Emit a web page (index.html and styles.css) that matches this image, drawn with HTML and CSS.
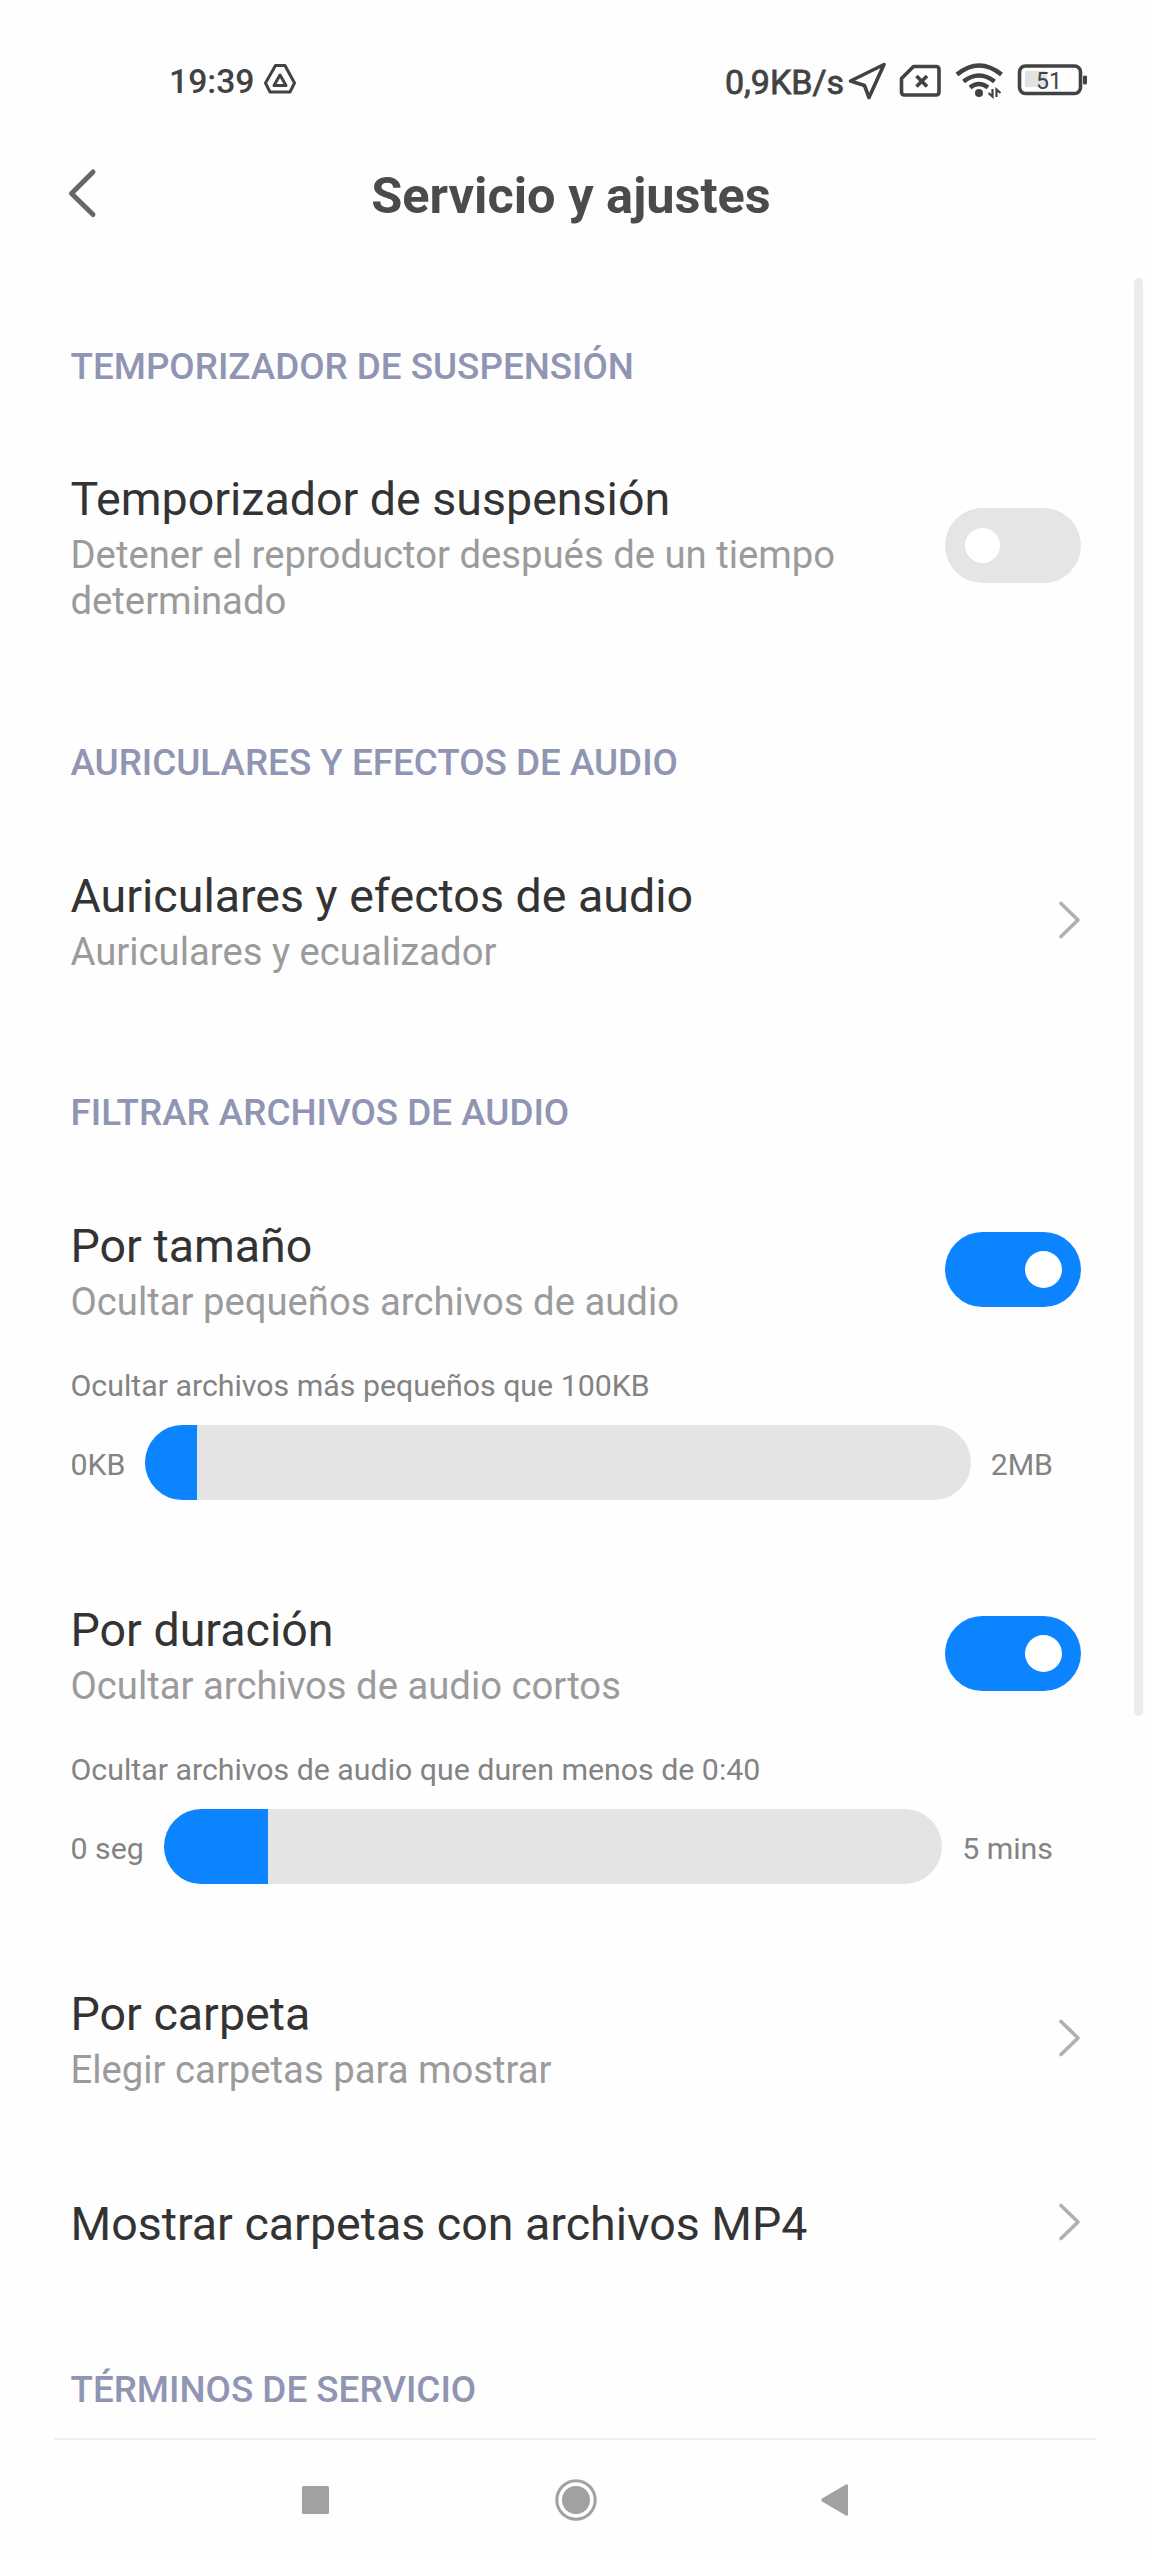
FILE: index.html
```html
<!DOCTYPE html>
<html lang="es">
<head>
<meta charset="utf-8">
<title>Servicio y ajustes</title>
<link rel="stylesheet" href="styles.css">
</head>
<body>
<header class="status">
  <span class="clock">19:39</span>
  <svg class="drive" width="34" height="32" viewBox="263 63 34 32"><path d="M275.500 65.500h9.500l9.500 17.500-4.500 9h-20l-4.500-9z"/><path d="M280 75l-6 10.500h12z"/></svg>
  <span class="speed">0,9KB/s</span>
  <svg class="tray" width="242" height="40" viewBox="848 60 242 40">
    <path d="M884 64.500L850.500 81l14 4.500 4.500 12z"/>
    <path d="M913.500 66.500H936q3 0 3 3V92q0 3-3 3H904.500q-3 0-3-3V78.500zM916.500 76l10.500 10.500M927 76l-10.500 10.500"/>
    <path d="M957 74.500q22-18 44.500 0M963.500 81.500q15.500-12 31 0M970 87.500q9-7 18 0" class="wave"/>
    <circle cx="979" cy="93" r="4" class="solid"/>
    <path d="M992.500 89v7.500l-4-3.500M996.500 97v-7.500l4 3.500" class="thin"/>
    <rect x="1025" y="71" width="22" height="16" rx="2" class="charge"/>
    <rect x="1019.500" y="66" width="61" height="27.500" rx="6"/>
    <rect x="1083" y="75.500" width="4" height="9" rx="1.500" class="solid"/>
    <text x="1036" y="88.500">51</text>
  </svg>
</header>
<div class="titlebar">
  <svg class="back" width="30" height="52" viewBox="67 167 30 52"><path d="M93 172L71.500 193.500 93 214.500"/></svg>
  <h1>Servicio y ajustes</h1>
</div>
<main>
  <h2>TEMPORIZADOR DE SUSPENSIÓN</h2>
  <section class="item tall">
    <div class="copy"><h3>Temporizador de suspensión</h3><p>Detener el reproductor después de un tiempo determinado</p></div>
    <span class="toggle"></span>
  </section>
  <h2>AURICULARES Y EFECTOS DE AUDIO</h2>
  <section class="item">
    <div class="copy"><h3>Auriculares y efectos de audio</h3><p>Auriculares y ecualizador</p></div>
    <svg class="chev" width="24" height="40" viewBox="0 0 24 40"><path d="M4 3.500L21 20 4 36.500"/></svg>
  </section>
  <h2>FILTRAR ARCHIVOS DE AUDIO</h2>
  <section class="item">
    <div class="copy"><h3>Por tamaño</h3><p>Ocultar pequeños archivos de audio</p></div>
    <span class="toggle on"></span>
  </section>
  <section class="range">
    <label>Ocultar archivos más pequeños que 100KB</label>
    <div class="scale"><span>0KB</span><div class="bar"><div class="fill" style="width:52px"></div></div><span>2MB</span></div>
  </section>
  <section class="item">
    <div class="copy"><h3>Por duración</h3><p>Ocultar archivos de audio cortos</p></div>
    <span class="toggle on"></span>
  </section>
  <section class="range">
    <label>Ocultar archivos de audio que duren menos de 0:40</label>
    <div class="scale"><span>0 seg</span><div class="bar"><div class="fill" style="width:104px"></div></div><span>5 mins</span></div>
  </section>
  <section class="item">
    <div class="copy"><h3>Por carpeta</h3><p>Elegir carpetas para mostrar</p></div>
    <svg class="chev" width="24" height="40" viewBox="0 0 24 40"><path d="M4 3.500L21 20 4 36.500"/></svg>
  </section>
  <section class="item single">
    <div class="copy"><h3>Mostrar carpetas con archivos MP4</h3></div>
    <svg class="chev" width="24" height="40" viewBox="0 0 24 40"><path d="M4 3.500L21 20 4 36.500"/></svg>
  </section>
  <h2>TÉRMINOS DE SERVICIO</h2>
</main>
<nav>
  <svg width="44" height="44" viewBox="0 0 44 44"><rect x="8" y="8" width="27" height="28" rx="1.500"/></svg>
  <svg width="44" height="44" viewBox="0 0 44 44"><circle cx="22" cy="22" r="14"/><circle cx="22" cy="22" r="19.200" class="ring"/></svg>
  <svg width="44" height="44" viewBox="0 0 44 44"><path d="M9 20.500L33 6.500Q35 5.500 35 8V36Q35 38.500 33 37.500L9 23.500Q7.500 22 9 20.500z"/></svg>
</nav>
<div class="scrollbar"></div>
</body>
</html>
```
FILE: styles.css
```css
* { box-sizing: border-box; margin: 0; padding: 0; }
body { position: relative; width: 1152px; height: 2560px; overflow: hidden; background: #fefefe; font-family: Roboto, sans-serif; display: flex; flex-direction: column; }
svg { display: block; flex: none; }
.status { height: 140px; padding: 60px 62px 0 169px; display: flex; align-items: flex-start; color: #424242; font-size: 33.700px; line-height: 44px; font-weight: 500; }
.status span { white-space: nowrap; }
.drive { margin: 3px 0 0 9px; fill: none; stroke: #424242; stroke-width: 3; stroke-linejoin: round; }
.speed { margin-left: auto; font-size: 34px; font-weight: 400; -webkit-text-stroke: .8px #424242; }
.tray { margin-left: 4px; fill: none; stroke: #424242; stroke-width: 3.6; stroke-linejoin: round; }
.tray .wave { stroke-width: 4.600; }
.tray .thin { stroke-width: 2.200; stroke-linejoin: miter; }
.tray .solid { fill: #424242; stroke: none; }
.tray .charge { fill: #e2e2e2; stroke: none; }
.tray text { fill: #424242; stroke: none; font-size: 23px; font-weight: 400; }
.titlebar { height: 204px; padding: 27px 67px 0; display: grid; grid-template-columns: 30px 1fr 30px; }
.back { fill: none; stroke: #666; stroke-width: 5; stroke-linecap: round; stroke-linejoin: round; }
h1 { color: #4b4b4b; font-size: 50.500px; line-height: 57px; font-weight: 700; text-align: center; white-space: nowrap; margin-left: -10px; }
main { height: 2094px; padding: 1px 0 0 70.500px; overflow: hidden; flex: none; }
h2 { height: 44px; line-height: 44px; font-size: 36.800px; font-weight: 500; color: #8f95b2; white-space: nowrap; }
.item { height: 107px; margin: 84px 71px 115px 0; display: flex; align-items: center; justify-content: space-between; }
.tall { height: 152px; margin-top: 83px; margin-bottom: 117px; }
.copy { width: 800px; }
h3 { font-size: 46.550px; line-height: 54px; font-weight: 400; color: #333; white-space: nowrap; }
p { margin-top: 7px; font-size: 38.250px; line-height: 45.300px; color: #9b9b9b; }
.toggle { width: 136px; height: 75px; border-radius: 38px; background: #e5e5e5; padding: 20px; margin-top: -7px; }
.tall .toggle { margin-top: -5px; }
.toggle::before { content: ""; display: block; width: 35px; height: 35px; border-radius: 50%; background: #fff; }
.on { background: #0d84ff; padding: 19px; }
.on::before { width: 37px; height: 37px; margin-left: auto; }
.chev { margin-top: -6px; fill: none; stroke: #b0b0b0; stroke-width: 3.600; stroke-linecap: round; stroke-linejoin: round; }
.range { margin: -75px 99px 103px 0; color: #838383; font-size: 30.300px; }
.range label { display: block; line-height: 38px; margin-bottom: 21px; padding-top: 1px; height: 38px; }
.scale { display: flex; align-items: center; gap: 20px; height: 75px; }
.scale span { line-height: 38px; white-space: nowrap; margin-top: 4px; }
.bar { flex: 1; height: 75px; border-radius: 38px; overflow: hidden; background: #e4e4e4; }
.fill { height: 100%; background: #0d84ff; }
.range + .item { margin-top: 0; }
.item.single { height: 54px; margin-top: -12px; margin-bottom: 117px; }
.single .chev { margin-top: -4px; }
nav { height: 122px; margin: 0 55px 0 54px; border-top: 2px solid #f1f1f1; padding: 38px 240px 0 240px; display: flex; justify-content: space-between; }
nav svg { fill: #a1a1a1; }
nav .ring { fill: none; stroke: #a1a1a1; stroke-width: 3; }
.scrollbar { position: absolute; left: 1134px; top: 278px; width: 9px; height: 1438px; border-radius: 5px; background: #ebebeb; }
```
